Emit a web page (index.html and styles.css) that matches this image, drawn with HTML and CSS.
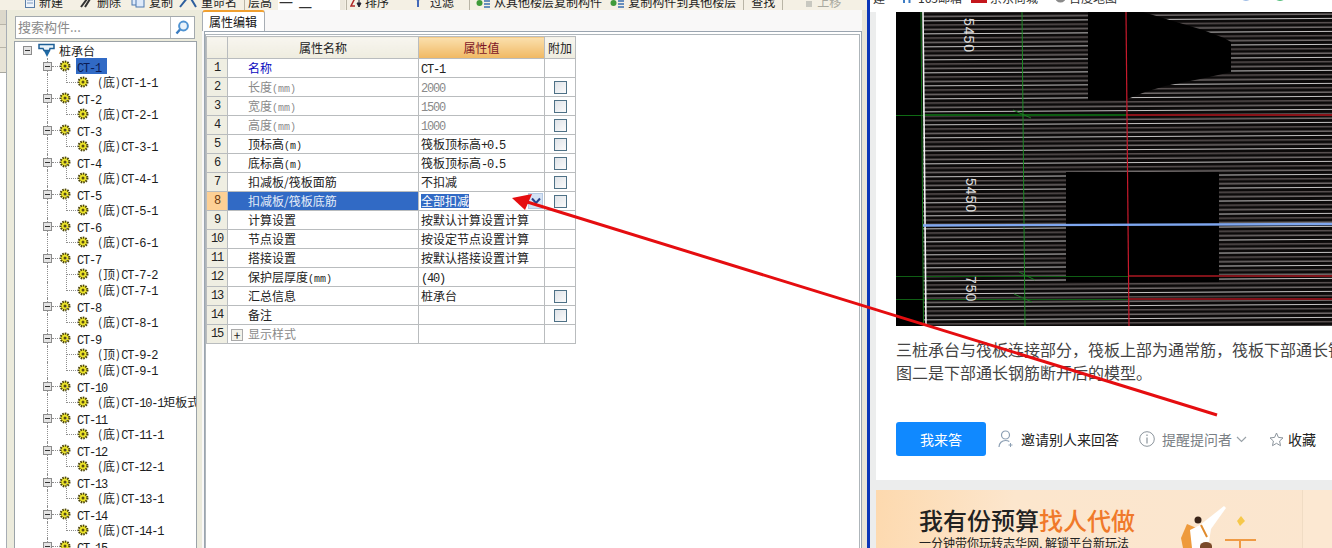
FILE: index.html
```html
<!DOCTYPE html>
<html lang="zh-CN">
<head>
<meta charset="utf-8">
<title>属性编辑</title>
<link rel="stylesheet" href="styles.css">
</head>
<body>
<svg class="defs" width="0" height="0" aria-hidden="true">
  <defs>
    <symbol id="gear" viewBox="0 0 12 12">
      <circle cx="6" cy="6" r="4.4" fill="#eee62a" stroke="#4c4510" stroke-width="2.2" stroke-dasharray="1.5 1"/>
      <circle cx="6" cy="6" r="1.5" fill="#5a4e10"/>
    </symbol>
    <symbol id="gicon" viewBox="0 0 14 12">
      <circle cx="3.5" cy="7" r="3" fill="#3f9b3a"/>
      <path d="M8 2h6M8 5h6M8 8h6M8 11h6" stroke="#3a6fb0" stroke-width="1.5"/>
    </symbol>
    <pattern id="hatch" width="20" height="13" patternUnits="userSpaceOnUse" patternTransform="translate(0 13) rotate(-0.35)">
      <rect width="20" height="13" fill="#0c0a0a"/>
      <rect y="0" width="20" height="1" fill="#c4c2c2"/>
      <rect y="4.33" width="20" height="1" fill="#7f7575"/>
      <rect y="8.66" width="20" height="1" fill="#a8a0a0"/>
    </pattern>
  </defs>
</svg>

<div class="app">
  <div class="toolbar">
    <div class="tool-row">
      <span class="tool first"><svg class="ti" width="10" height="12" viewBox="0 0 10 12"><rect x="0.5" y="0.5" width="9" height="11" fill="#eef3fa" stroke="#5b7ea8"/><path d="M2 4h6M2 7h6" stroke="#7d9ac0"/></svg>新建</span>
      <span class="tool ml16"><svg class="ti" width="14" height="12" viewBox="0 0 14 12"><path d="M2 11 8 3M6 11 11 3" stroke="#333" stroke-width="2"/></svg>删除</span>
      <span class="tool ml10"><svg class="ti" width="14" height="12" viewBox="0 0 14 12"><rect x="1" y="1" width="8" height="8" fill="#dfeafa" stroke="#4d79b0"/><rect x="5" y="3" width="8" height="8" fill="#dfeafa" stroke="#4d79b0"/></svg>复制</span>
      <span class="tool ml6"><svg class="ti" width="18" height="12" viewBox="0 0 18 12"><path d="M1 11 9 1h2l6 10" fill="none" stroke="#2f5f9e" stroke-width="2"/></svg>重命名</span>
      <i class="sep sep-a"></i>
      <span class="tool">层高</span>
      <span class="select">一 二</span>
      <i class="sep sep-e"></i>
      <span class="tool t-sort"><svg class="ti" width="12" height="12" viewBox="0 0 12 12"><path d="M1 2h4L1 10h4" fill="none" stroke="#b02a2a" stroke-width="1.5"/><path d="M9 1v7M7 7l2 4 2-4z" stroke="#223" fill="#223"/></svg>排序</span>
      <span class="tool ml25"><svg class="ti ti-b" width="8" height="12" viewBox="0 0 8 12"><path d="M1 0h6L5 5v6H3V5z" fill="#4268b8"/></svg>过滤</span>
      <i class="sep sep-b"></i>
      <span class="tool"><svg class="ti" width="14" height="12"><use href="#gicon"/></svg>从其他楼层复制构件</span>
      <span class="tool ml8"><svg class="ti" width="14" height="12"><use href="#gicon"/></svg>复制构件到其他楼层</span>
      <i class="sep sep-c"></i>
      <span class="tool">查找</span>
      <i class="sep sep-d"></i>
      <span class="tool off ml20"><svg class="ti" width="8" height="12" viewBox="0 0 8 12"><rect x="1" y="5" width="6" height="6" fill="#c8c8c0"/></svg>上移</span>
    </div>
  </div>

  <div class="main">
    <div class="side-strip">
      <div class="strip-a"></div>
      <div class="strip-b"></div>
      <div class="strip-d"></div>
      <div class="strip-c"></div>
    </div>

    <aside class="side">
      <div class="search">
        <span class="search-input">搜索构件...</span>
        <span class="search-btn">
          <svg width="15" height="15" viewBox="0 0 15 15"><circle cx="8.5" cy="6" r="4.4" fill="#e8f2fb" stroke="#4f93d2" stroke-width="2"/><path d="M5 9.5 1.5 13.5" stroke="#3a7cc0" stroke-width="2.4"/></svg>
        </span>
      </div>
      <div class="tree">
        <div class="row root"><b class="exp"></b><svg class="root-ico" width="17" height="15" viewBox="0 0 17 15"><path d="M1 1.5h15v4H12l-.5 2H6L5 5.5H1z" fill="#eaf3fa" stroke="#1e5f96" stroke-width="1.5"/><path d="M6 8h6L9 14z" fill="#1f6aa5"/></svg><span class="root-label">桩承台</span></div>

        <div class="row lv1"><b class="exp"></b><svg class="g1"><use href="#gear"/></svg><span class="name sel"><span class="l">CT-1</span></span></div>
        <div class="row lv2"><svg class="g2"><use href="#gear"/></svg><span class="name"><span class="tag">(底)</span><span class="l">CT-1-1</span></span></div>
        <div class="row lv1"><b class="exp"></b><svg class="g1"><use href="#gear"/></svg><span class="name"><span class="l">CT-2</span></span></div>
        <div class="row lv2"><svg class="g2"><use href="#gear"/></svg><span class="name"><span class="tag">(底)</span><span class="l">CT-2-1</span></span></div>
        <div class="row lv1"><b class="exp"></b><svg class="g1"><use href="#gear"/></svg><span class="name"><span class="l">CT-3</span></span></div>
        <div class="row lv2"><svg class="g2"><use href="#gear"/></svg><span class="name"><span class="tag">(底)</span><span class="l">CT-3-1</span></span></div>
        <div class="row lv1"><b class="exp"></b><svg class="g1"><use href="#gear"/></svg><span class="name"><span class="l">CT-4</span></span></div>
        <div class="row lv2"><svg class="g2"><use href="#gear"/></svg><span class="name"><span class="tag">(底)</span><span class="l">CT-4-1</span></span></div>
        <div class="row lv1"><b class="exp"></b><svg class="g1"><use href="#gear"/></svg><span class="name"><span class="l">CT-5</span></span></div>
        <div class="row lv2"><svg class="g2"><use href="#gear"/></svg><span class="name"><span class="tag">(底)</span><span class="l">CT-5-1</span></span></div>
        <div class="row lv1"><b class="exp"></b><svg class="g1"><use href="#gear"/></svg><span class="name"><span class="l">CT-6</span></span></div>
        <div class="row lv2"><svg class="g2"><use href="#gear"/></svg><span class="name"><span class="tag">(底)</span><span class="l">CT-6-1</span></span></div>
        <div class="row lv1"><b class="exp"></b><svg class="g1"><use href="#gear"/></svg><span class="name"><span class="l">CT-7</span></span></div>
        <div class="row lv2 mid"><svg class="g2"><use href="#gear"/></svg><span class="name"><span class="tag">(顶)</span><span class="l">CT-7-2</span></span></div>
        <div class="row lv2"><svg class="g2"><use href="#gear"/></svg><span class="name"><span class="tag">(底)</span><span class="l">CT-7-1</span></span></div>
        <div class="row lv1"><b class="exp"></b><svg class="g1"><use href="#gear"/></svg><span class="name"><span class="l">CT-8</span></span></div>
        <div class="row lv2"><svg class="g2"><use href="#gear"/></svg><span class="name"><span class="tag">(底)</span><span class="l">CT-8-1</span></span></div>
        <div class="row lv1"><b class="exp"></b><svg class="g1"><use href="#gear"/></svg><span class="name"><span class="l">CT-9</span></span></div>
        <div class="row lv2 mid"><svg class="g2"><use href="#gear"/></svg><span class="name"><span class="tag">(顶)</span><span class="l">CT-9-2</span></span></div>
        <div class="row lv2"><svg class="g2"><use href="#gear"/></svg><span class="name"><span class="tag">(底)</span><span class="l">CT-9-1</span></span></div>
        <div class="row lv1"><b class="exp"></b><svg class="g1"><use href="#gear"/></svg><span class="name"><span class="l">CT-10</span></span></div>
        <div class="row lv2"><svg class="g2"><use href="#gear"/></svg><span class="name"><span class="tag">(底)</span><span class="l">CT-10-1</span>矩板式</span></div>
        <div class="row lv1"><b class="exp"></b><svg class="g1"><use href="#gear"/></svg><span class="name"><span class="l">CT-11</span></span></div>
        <div class="row lv2"><svg class="g2"><use href="#gear"/></svg><span class="name"><span class="tag">(底)</span><span class="l">CT-11-1</span></span></div>
        <div class="row lv1"><b class="exp"></b><svg class="g1"><use href="#gear"/></svg><span class="name"><span class="l">CT-12</span></span></div>
        <div class="row lv2"><svg class="g2"><use href="#gear"/></svg><span class="name"><span class="tag">(底)</span><span class="l">CT-12-1</span></span></div>
        <div class="row lv1"><b class="exp"></b><svg class="g1"><use href="#gear"/></svg><span class="name"><span class="l">CT-13</span></span></div>
        <div class="row lv2"><svg class="g2"><use href="#gear"/></svg><span class="name"><span class="tag">(底)</span><span class="l">CT-13-1</span></span></div>
        <div class="row lv1"><b class="exp"></b><svg class="g1"><use href="#gear"/></svg><span class="name"><span class="l">CT-14</span></span></div>
        <div class="row lv2"><svg class="g2"><use href="#gear"/></svg><span class="name"><span class="tag">(底)</span><span class="l">CT-14-1</span></span></div>
        <div class="row lv1"><b class="exp"></b><svg class="g1"><use href="#gear"/></svg><span class="name"><span class="l">CT-15</span></span></div>
      </div>
    </aside>

    <section class="editor">
      <div class="tab-strip"><span class="tab">属性编辑</span></div>
      <div class="tab-body">
        <div class="tab-inner">
          <table class="grid">
            <colgroup><col class="c0"><col class="c1"><col class="c2"><col class="c3"></colgroup>
            <thead>
              <tr><th class="hd"></th><th class="hd">属性名称</th><th class="hd hv">属性值</th><th class="hd ha">附加</th></tr>
            </thead>
            <tbody>
              <tr><td class="idx">1</td><td class="nm blue">名称</td><td class="val"><span class="l">CT-1</span></td><td></td></tr>
              <tr><td class="idx">2</td><td class="nm mute">长度<span class="l u">(mm)</span></td><td class="val mute"><span class="l">2000</span></td><td class="ck"><i class="box"></i></td></tr>
              <tr><td class="idx">3</td><td class="nm mute">宽度<span class="l u">(mm)</span></td><td class="val mute"><span class="l">1500</span></td><td class="ck"><i class="box"></i></td></tr>
              <tr><td class="idx">4</td><td class="nm mute">高度<span class="l u">(mm)</span></td><td class="val mute"><span class="l">1000</span></td><td class="ck"><i class="box"></i></td></tr>
              <tr><td class="idx">5</td><td class="nm">顶标高<span class="l u">(m)</span></td><td class="val">筏板顶标高<span class="l">+0.5</span></td><td class="ck"><i class="box"></i></td></tr>
              <tr><td class="idx">6</td><td class="nm">底标高<span class="l u">(m)</span></td><td class="val">筏板顶标高<span class="l">-0.5</span></td><td class="ck"><i class="box"></i></td></tr>
              <tr><td class="idx">7</td><td class="nm">扣减板/筏板面筋</td><td class="val">不扣减</td><td class="ck"><i class="box"></i></td></tr>
              <tr class="cur"><td class="idx">8</td><td class="nm">扣减板/筏板底筋</td><td class="val"><div class="editing"><span class="picked">全部扣减</span><span class="drop"><svg width="10" height="8" viewBox="0 0 10 8"><path d="M1 1.5 5 6l4-4.5" fill="none" stroke="#28408c" stroke-width="2"/></svg></span></div></td><td class="ck"><i class="box"></i></td></tr>
              <tr><td class="idx">9</td><td class="nm">计算设置</td><td class="val">按默认计算设置计算</td><td></td></tr>
              <tr><td class="idx">10</td><td class="nm">节点设置</td><td class="val">按设定节点设置计算</td><td></td></tr>
              <tr><td class="idx">11</td><td class="nm">搭接设置</td><td class="val">按默认搭接设置计算</td><td></td></tr>
              <tr><td class="idx">12</td><td class="nm">保护层厚度<span class="l u">(mm)</span></td><td class="val"><span class="l">(40)</span></td><td></td></tr>
              <tr><td class="idx">13</td><td class="nm">汇总信息</td><td class="val">桩承台</td><td class="ck"><i class="box"></i></td></tr>
              <tr><td class="idx">14</td><td class="nm">备注</td><td class="val"></td><td class="ck"><i class="box"></i></td></tr>
              <tr><td class="idx">15</td><td class="nm mute plus-cell"><b class="plus">+</b>显示样式</td><td class="val"></td><td></td></tr>
            </tbody>
          </table>
        </div>
      </div>
    </section>
    <div class="edge-strip"></div>
  </div>
</div>

<div class="divider"></div>

<div class="web">
  <div class="topbar">
    <div class="top-row">
      <span class="bm">建</span>
      <span class="bm bm-a"><svg width="16" height="12" viewBox="0 0 16 12"><rect width="16" height="12" fill="#fff"/><path d="M0 3h16M0 7.5h16M5 0v12M10.500 0v12" stroke="#3d7cc4" stroke-width="2"/></svg>163邮箱</span>
      <span class="bm bm-b"><svg width="16" height="12" viewBox="0 0 16 12"><rect width="16" height="12" fill="#c4161c"/></svg>京东商城</span>
      <span class="bm bm-c"><svg width="11" height="12" viewBox="0 0 11 12"><circle cx="5.500" cy="6" r="5.500" fill="#8a8a8a"/></svg>百度地图</span>
      <span class="top-icons">
        <svg width="16" height="12" viewBox="0 0 16 12"><circle cx="8" cy="-2" r="7" fill="#dce9fb" stroke="#7fa6dd" stroke-width="1.500"/></svg>
        <svg width="18" height="12" viewBox="0 0 18 12"><circle cx="9" cy="-3" r="8" fill="#3ec46d" stroke="#19a84f" stroke-width="1.500"/></svg>
        <span class="top-num">66</span>
      </span>
    </div>
  </div>

  <div class="card">
    <svg class="cad" width="436" height="314" viewBox="896 12 436 314">
      <rect x="896" y="12" width="436" height="314" fill="#000"/>
      <rect x="923" y="12" width="409" height="314" fill="url(#hatch)"/>
      <rect x="1088" y="12" width="38" height="88" fill="#000"/>
      <path d="M1125 12h18l20 6 20 6 20 6 21 8 7 4v30l-26 6-40 8-20 6-20 8z" fill="#000"/>
      <rect x="1066" y="172" width="153" height="110" fill="#000"/>
      <path d="M896 115.500h27" stroke="#0f6a14" stroke-width="1"/>
      <path d="M923 115h203" stroke="#0d5c12" stroke-width="2"/>
      <path d="M1126 115h206" stroke="#8a1218" stroke-width="2"/>
      <path d="M896 276.500h232M896 299.500h232" stroke="#0f5e14" stroke-width="1.200"/>
      <path d="M1128 276h204M1128 299h204" stroke="#801219" stroke-width="2"/>
      <path d="M1022 12l3 314" stroke="#1c8a24" stroke-width="1"/>
      <path d="M1126 12l3 314" stroke="#c81a2c" stroke-width="1.200"/>
      <path d="M921 12l2.500 314" stroke="#167a1c" stroke-width="1"/>
      <path d="M923 12l3 314" stroke="#f4f4f4" stroke-width="1.600"/>
      <path d="M923 225.500 1332 224" stroke="#7ea6ef" stroke-width="2.400"/>
      <path d="M1013 110l18 8M1019 272l16 8M1014 294l18 8" stroke="#1c7a22" stroke-width="1"/>
      <text class="cad-t" transform="translate(964 18) rotate(90)">5450</text>
      <text class="cad-t" transform="translate(966 178) rotate(90)">5450</text>
      <text class="cad-t" transform="translate(966 276) rotate(90)">750</text>
    </svg>
    <p class="para">三桩承台与筏板连接部分，筏板上部为通常筋，筏板下部通长钢筋断开，<br>图二是下部通长钢筋断开后的模型。</p>
    <div class="actions">
      <span class="answer">我来答</span>
      <span class="act act-invite">
        <svg width="16" height="18" viewBox="0 0 16 18"><circle cx="7.500" cy="5" r="4" fill="none" stroke="#8da0b4" stroke-width="1.200"/><path d="M1 17c0-4 3-6.500 6.500-6.500 1.500 0 2.800.4 3.800 1.100" fill="none" stroke="#8da0b4" stroke-width="1.200"/><path d="M12.500 13v4M10.500 15h4" stroke="#8da0b4"/></svg>
        <span class="act-t">邀请别人来回答</span>
      </span>
      <span class="act act-remind">
        <svg width="16" height="16" viewBox="0 0 16 16"><circle cx="8" cy="8" r="7.300" fill="none" stroke="#8b949c" stroke-width="1"/><path d="M8 6.500V12.500M8 3.500v1.500" stroke="#8b949c" stroke-width="1.200"/></svg>
        <span class="act-g">提醒提问者</span>
        <svg width="11" height="7" viewBox="0 0 11 7"><path d="M1 1l4.500 4.500L10 1" fill="none" stroke="#9aa2a8" stroke-width="1.200"/></svg>
      </span>
      <span class="act act-star">
        <svg width="15" height="15" viewBox="0 0 15 15"><path d="M7.500 1 9.400 5.400l4.600.5-3.400 3.100.9 4.700-4-2.400-4 2.400.9-4.700L1 5.900l4.600-.5z" fill="none" stroke="#8b949c" stroke-width="1"/></svg>
        <span class="act-t">收藏</span>
      </span>
    </div>
  </div>

  <div class="banner">
    <div class="ad-text">
      <div class="ad-title">我有份预算<em>找人代做</em></div>
      <div class="ad-sub">一分钟带你玩转志华网, 解锁平台新玩法</div>
    </div>
    <svg class="ad-art" width="82" height="58" viewBox="0 0 82 58">
      <path d="M3 48l6-14 12 5-3 19H5z" fill="#ee9a3c"/>
      <path d="M12 40l10-5 24-19 2 2-15 21-3 19H14z" fill="#fff"/>
      <circle cx="20" cy="30" r="3.500" fill="#3a2418"/>
      <path d="M23 35l6 12" stroke="#e08a2c" stroke-width="2"/>
      <path d="M22 56a6 4 0 0 1 12 0v2H22z" fill="#7a4a2a"/>
      <path d="M62 36l-3-5 4-5 4 5z" fill="#f6c84a"/>
      <path d="M47 50h31M62 50v8" stroke="#ef9a44" stroke-width="2"/>
    </svg>
    <div class="ad-rest"></div>
  </div>
</div>

<svg class="arrow" width="1332" height="548" viewBox="0 0 1332 548">
  <path d="M1217 415 524 201" stroke="#e50d10" stroke-width="3" fill="none"/>
  <path d="M512 198 532 194 525 210z" fill="#e50d10"/>
</svg>
</body>
</html>
```

FILE: styles.css
```css
* { box-sizing: border-box; }
html, body { margin: 0; padding: 0; }
body {
  width: 1332px;
  height: 548px;
  overflow: hidden;
  display: flex;
  position: relative;
  font-family: "Noto Sans CJK SC", "Liberation Sans", sans-serif;
  font-size: 12px;
  color: #1a1a1a;
  background: #fff;
}
.defs { position: absolute; }
.l { font-family: "Liberation Mono", monospace; font-size: 12px; letter-spacing: -1.2px; line-height: 1; }
.u { font-size: 10px; letter-spacing: 0; }
.tag { letter-spacing: 1px; }

/* desktop application */
.app {
  width: 867px;
  height: 548px;
  display: flex;
  flex-direction: column;
  flex: none;
  background: #ecebdc;
}
.toolbar {
  height: 10px;
  flex: none;
  overflow: hidden;
  background: #f4f0e4;
}
.tool-row {
  display: flex;
  align-items: center;
  height: 16px;
  margin-top: -6px;
  padding-left: 25px;
  white-space: nowrap;
}
.tool { display: flex; align-items: center; gap: 4px; color: #222; line-height: 16px; }
.tool.off { color: #a9a9a0; }
.t-sort { gap: 3px; }
.ti { flex: none; }
.ti-b { margin-right: 4px; }
.ml6 { margin-left: 6px; }
.ml8 { margin-left: 8px; }
.ml10 { margin-left: 10px; }
.ml16 { margin-left: 16px; }
.ml20 { margin-left: 20px; }
.ml25 { margin-left: 25px; }
.sep { width: 1px; height: 16px; background: #b9b5a6; margin: 0 6px; flex: none; }
.sep-a { margin: 0 3px 0 7px; }
.sep-b { margin: 0 6px 0 15px; }
.sep-c { margin: 0 7px; }
.sep-d { margin: 0 2px 0 7px; }
.sep-e { margin: 0 3px 0 1px; }
.select {
  width: 67px;
  height: 16px;
  margin-left: 6px;
  padding-left: 1px;
  background: linear-gradient(90deg, #fff 0 92%, #ece8dc 92%);
  color: #333;
  font-size: 14px;
  letter-spacing: 1px;
  line-height: 16px;
  white-space: nowrap;
  overflow: hidden;
}

.main { flex: 1; min-height: 0; display: flex; }

.side-strip {
  width: 7px;
  flex: none;
  display: flex;
  flex-direction: column;
  border-right: 1px solid #a7adb4;
}
.strip-a { height: 15px; background: #dcd8cb; border-bottom: 1px solid #b8b4a8; }
.strip-b { height: 23px; background: #e7e3d6; border-bottom: 1px solid #b8b4a8; }
.strip-d { height: 25px; background: #e7e3d6; border-bottom: 1px solid #a8a8a0; }
.strip-c { flex: 1; background: #fff; }

.side {
  width: 195px;
  flex: none;
  padding: 6px 5px 0 7px;
  display: flex;
  flex-direction: column;
  min-height: 0;
}
.search {
  height: 23px;
  flex: none;
  margin: 0 2px 2px 1px;
  display: flex;
  background: #fff;
  border: 1px solid #a3a9ad;
}
.search-input {
  flex: 1;
  padding-left: 2px;
  font-size: 13px;
  line-height: 20px;
  color: #8a8a8a;
  border-right: 1px solid #b8bdc0;
}
.search-btn {
  width: 23px;
  flex: none;
  display: flex;
  align-items: center;
  justify-content: center;
}

.tree {
  flex: 1;
  min-height: 0;
  overflow: hidden;
  background: #fff;
  border: 1px solid #9ba3a8;
  border-bottom: 0;
}
.row {
  position: relative;
  height: 16px;
  display: flex;
  align-items: center;
  white-space: nowrap;
  color: #1c1c1c;
}
.row::before, .row::after { content: ""; position: absolute; }
.exp {
  position: relative;
  z-index: 1;
  width: 9px;
  height: 9px;
  flex: none;
  border: 1px solid #8c8c8c;
  background: #e4e4e4;
}
.exp::after {
  content: "";
  position: absolute;
  left: 1px;
  top: 3px;
  width: 5px;
  height: 1px;
  background: #333;
}
.root { padding-left: 8px; }
.root-ico { margin-left: 6px; flex: none; }
.root-label { margin-left: 4px; font-size: 12px; }
.lv1 { padding-left: 28px; }
.lv1::before { left: 32px; top: 0; bottom: 0; border-left: 1px dotted #8e8e8e; }
.lv1::after { left: 37px; top: 8px; width: 8px; border-top: 1px dotted #8e8e8e; }
.g1 { width: 12px; height: 12px; margin-left: 7px; flex: none; }
.lv1 .name { margin-left: 5px; padding: 0 1px; height: 16px; line-height: 18px; }
.sel { background: #316ac5; color: #0b1c55; width: 31px; }
.lv2 { padding-left: 62px; }
.lv2::before { left: 32px; top: 0; bottom: 0; border-left: 1px dotted #8e8e8e; }
.lv2::after { left: 51px; top: -8px; height: 16px; width: 11px; border-left: 1px dotted #8e8e8e; border-bottom: 1px dotted #8e8e8e; }
.g2 { width: 12px; height: 12px; flex: none; }
.lv2 .name { margin-left: 9px; height: 16px; line-height: 16px; }

/* property editor */
.editor {
  width: 660px;
  flex: none;
  display: flex;
  flex-direction: column;
  min-height: 0;
  background: #f9f8f8;
}
.tab-strip { height: 21px; flex: none; display: flex; align-items: flex-end; background: #f9f8f8; }
.tab {
  width: 63px;
  height: 21px;
  padding-left: 6px;
  line-height: 20px;
  background: #fff;
  border: 1px solid #a7adb4;
  border-top: 2px solid #f0a030;
  border-bottom: 0;
  border-radius: 3px 3px 0 0;
  color: #111;
  position: relative;
  z-index: 1;
}
.tab-body {
  flex: 1;
  min-height: 0;
  margin-left: 2px;
  border-top: 1px solid #9aa5b0;
  border-left: 1px solid #9aa5b0;
  border-right: 1px solid #9aa5b0;
  padding: 2px 1px 0 0;
  background: #fff;
}
.tab-inner {
  height: 100%;
  border: 1px solid #aeb5ba;
  border-bottom: 0;
  padding: 1px 0 0 0;
  background: #fff;
}
.grid {
  border-collapse: collapse;
  table-layout: fixed;
  width: 369px;
  background: #fff;
}
.c0 { width: 21px; }
.c1 { width: 191px; }
.c2 { width: 126px; }
.c3 { width: 31px; }
.grid th, .grid td {
  border: 1px solid #b9bcbe;
  padding: 0;
  font-weight: 400;
  line-height: 14px;
  white-space: nowrap;
  overflow: hidden;
}
.grid tr { height: 19px; }
.grid thead tr { height: 22px; }
.hd {
  background: linear-gradient(#f8f6ef, #eeecdf);
  color: #222;
  text-align: center;
}
.hv {
  background: linear-gradient(#fbe0ae, #f0b862);
  color: #7d1526;
}
.ha { background: linear-gradient(#f8f6ef, #eeecdf); }
.grid .idx {
  background: #efeee2;
  text-align: center;
  color: #222;
  font-family: "Liberation Mono", monospace;
  letter-spacing: -1.2px;
}
.grid .nm { padding-left: 20px; color: #222; }
.grid .val { padding-left: 2px; color: #222; }
.grid .blue { color: #0a0ac0; }
.grid .mute { color: #8a8a8a; }
.grid .ck { text-align: center; padding: 0; line-height: 13px; }
.box {
  display: block;
  width: 13px;
  height: 13px;
  margin: 0 auto;
  border: 1px solid #4e7186;
  background: linear-gradient(135deg, #dfe3e8, #fbfbfb);
}
.grid .plus-cell { padding-left: 3px; }
.plus {
  display: inline-block;
  width: 12px;
  height: 12px;
  margin-right: 5px;
  border: 1px solid #aaa;
  background: #f2f2ea;
  color: #222;
  font-weight: 400;
  line-height: 10px;
  text-align: center;
  vertical-align: -1px;
}
.grid .cur .idx { background: #fdd095; color: #6a3a10; }
.grid .cur .nm { background: #316ac5; color: #e4ecf8; }
.grid .cur .val { padding-bottom: 0; }
.editing { display: flex; align-items: center; justify-content: space-between; height: 18px; padding-right: 1px; }
.picked { background: #316ac5; color: #fff; line-height: 14px; }
.drop {
  width: 15px;
  height: 16px;
  display: flex;
  align-items: center;
  justify-content: center;
  background: #d4e2f4;
  border: 1px solid #b5c9e4;
}
.edge-strip { flex: 1; background: #e9e5d8; }

.divider {
  width: 3px;
  flex: none;
  background: #0b36b8;
}

/* web page */
.web {
  flex: 1;
  min-width: 0;
  height: 548px;
  display: flex;
  flex-direction: column;
  background: #eceded;
}
.topbar {
  height: 12px;
  flex: none;
  overflow: hidden;
  background: #fff;
}
.top-row {
  display: flex;
  align-items: center;
  height: 16px;
  margin-top: -11px;
  padding-left: 3px;
  white-space: nowrap;
  color: #333;
}
.bm { display: flex; align-items: center; gap: 3px; }
.bm svg { flex: none; }
.bm-a { margin-left: 14px; }
.bm-b { margin-left: 9px; }
.bm-c { margin-left: 17px; }
.top-icons { margin-left: auto; display: flex; align-items: flex-start; gap: 17px; padding-right: 12px; height: 27px; padding-top: 11px; }
.top-num { color: #e36b6b; font-size: 13px; line-height: 10px; margin-top: -6px; }

.card {
  flex: none;
  height: 468px;
  margin-left: 6px;
  padding-left: 20px;
  overflow: hidden;
  background: #fff;
}
.cad { display: block; }
.cad-t { font-family: "Liberation Sans", sans-serif; font-size: 14px; fill: #dcdcdc; letter-spacing: 1px; }
.para {
  margin: 12px 0 0;
  font-size: 16px;
  line-height: 23px;
  color: #444;
  white-space: nowrap;
}
.actions {
  display: flex;
  align-items: center;
  height: 34px;
  margin-top: 38px;
  font-size: 14px;
}
.answer {
  width: 90px;
  height: 34px;
  flex: none;
  border-radius: 3px;
  background: #1089ff;
  color: #fff;
  text-align: center;
  line-height: 34px;
}
.act { display: flex; align-items: center; flex: none; }
.act-invite { margin-left: 12px; gap: 7px; }
.act-remind { margin-left: 20px; gap: 7px; }
.act-remind svg:last-child { margin-left: -3px; }
.act-star { margin-left: 22px; gap: 4px; }
.act-t { color: #222; }
.act-g { color: #7a7f85; }

.banner {
  flex: none;
  height: 58px;
  margin-top: 10px;
  margin-left: 6px;
  display: flex;
  overflow: hidden;
  background: linear-gradient(100deg, #fdd9ae 0%, #fce6cd 30%, #fbe6cf 100%);
}
.ad-text { width: 302px; flex: none; padding: 15px 0 0 43px; }
.ad-title { height: 30px; font-size: 24px; line-height: 30px; font-weight: 500; color: #222; white-space: nowrap; }
.ad-title em { font-style: normal; color: #f0792a; }
.ad-sub { margin-top: 1px; font-size: 12px; line-height: 14px; color: #222; white-space: nowrap; }
.ad-art { flex: none; }
.ad-rest { flex: 1; margin-left: 42px; border-left: 1px solid #f0dcc4; background: #fce8d2; }

.arrow { position: absolute; left: 0; top: 0; pointer-events: none; }
```
